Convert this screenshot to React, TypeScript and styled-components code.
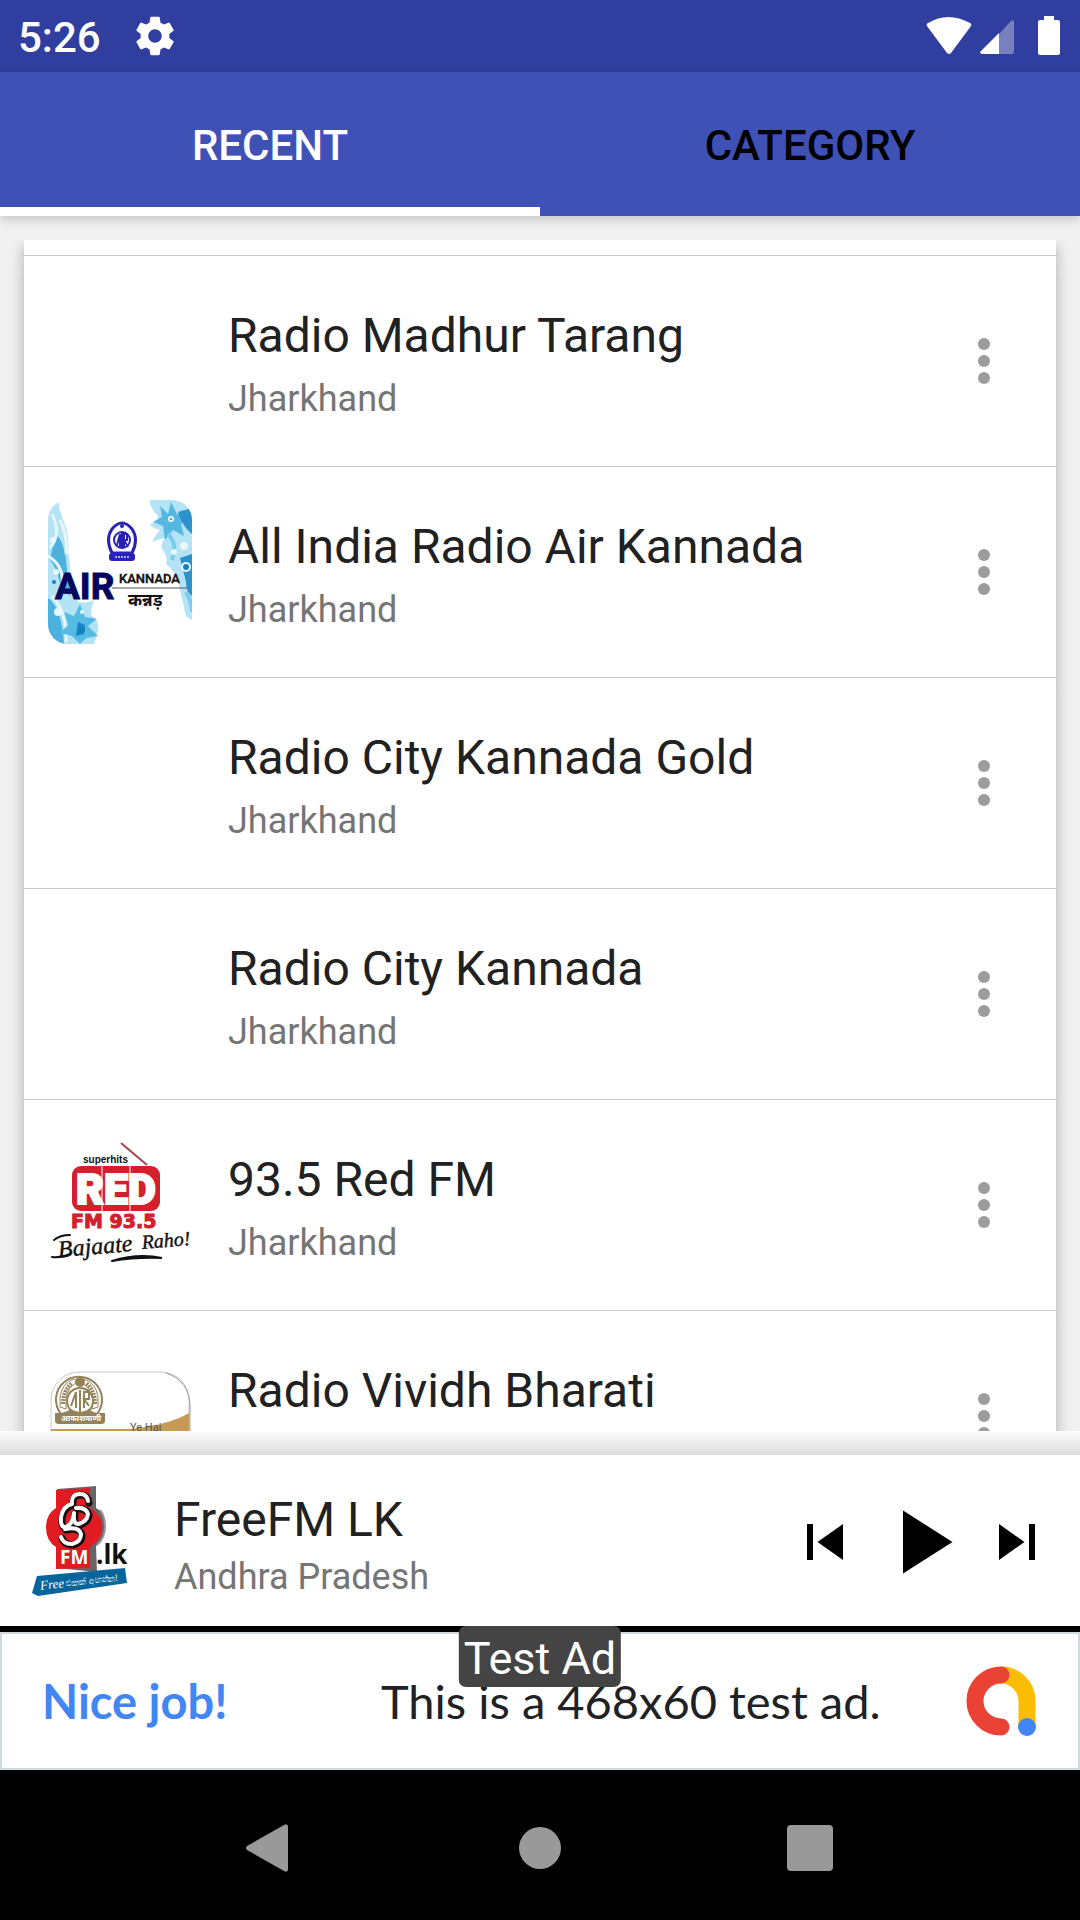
import React from "react";
import styled, { createGlobalStyle } from "styled-components";

const GlobalStyle = createGlobalStyle`
  * { box-sizing: border-box; }
  body { margin: 0; background: #f1f1f1; font-family: Roboto, "Noto Sans", sans-serif; }
  button { border: 0; padding: 0; background: none; font: inherit; color: inherit; cursor: pointer; }
  svg { display: block; }
`;

const Screen = styled.div`
  display: flex;
  flex-direction: column;
  height: 100vh;
  overflow: hidden;
`;

const StatusBar = styled.header`
  display: flex;
  align-items: center;
  flex: none;
  height: 72px;
  padding: 0 20px 0 18px;
  background: #303e9f;
  color: #fff;
`;

const Clock = styled.time`
  padding-top: 4px;
  font-size: 42px;
  font-weight: 500;
  line-height: 48px;
`;

const StatusIcons = styled.div`
  display: flex;
  align-items: center;
  gap: 8px;
  margin-left: auto;
`;

const GearIcon = styled.svg`
  width: 46px;
  height: 46px;
  margin-left: 31px;
`;

const Tabs = styled.nav`
  position: relative;
  z-index: 1;
  display: grid;
  grid-template-columns: 1fr 1fr;
  flex: none;
  height: 144px;
  background: #3f51b5;
  box-shadow: 0 3px 10px rgba(0, 0, 0, 0.2);
`;

const Tab = styled.button<{ $active?: boolean }>`
  && {
    padding-top: 12px;
    border-bottom: 9px solid ${(p) => (p.$active ? "#fff" : "transparent")};
    color: ${(p) => (p.$active ? "#fff" : "#000")};
    font-size: 42px;
    font-weight: 500;
    line-height: 48px;
  }
`;

const Main = styled.main`
  display: flex;
  flex-direction: column;
  flex: 1;
  min-height: 0;
  padding-top: 24px;
`;

const List = styled.ul`
  isolation: isolate;
  flex: 1;
  min-height: 0;
  overflow: hidden;
  margin: 0;
  padding: 0 24px;
  list-style: none;
`;

const Card = styled.li`
  position: relative;
  display: flex;
  align-items: center;
  gap: 36px;
  padding: 33px 24px;
  border-bottom: 1px solid #c8c8c8;
  background: #fff;

  &::before {
    content: "";
    position: absolute;
    inset: 0;
    z-index: -1;
    box-shadow: 0 6px 14px rgba(0, 0, 0, 0.3);
  }
`;

const CardTail = styled(Card)`
  height: 16px;
  padding: 0;
`;

const Thumb = styled.div`
  flex: none;
  width: 144px;
  height: 144px;
`;

const Texts = styled.div<{ $gap: number }>`
  display: flex;
  flex: 1;
  flex-direction: column;
  gap: ${(p) => p.$gap}px;
  min-width: 0;
  padding-top: 6px;
  white-space: nowrap;
`;

const Title = styled.h2`
  margin: 0;
  color: #212121;
  font-size: 48px;
  font-weight: 400;
  line-height: 56px;
`;

const Region = styled.p`
  margin: 0;
  color: #757575;
  font-size: 36px;
  line-height: 42px;
`;

const MoreButton = styled.button`
  display: grid;
  flex: none;
  place-items: center;
  width: 96px;
  height: 96px;
`;

const PlayerShade = styled.div`
  flex: none;
  height: 24px;
  background: linear-gradient(#fefefe, #dcdcdc);
`;

const Player = styled.section`
  display: flex;
  align-items: center;
  flex: none;
  height: 171px;
  padding: 3px 27px 0;
  background: #fff;
`;

const PlayerLogo = styled.div`
  flex: none;
  width: 147px;
`;

const Controls = styled.div`
  display: flex;
  align-items: center;
  gap: 6px;
`;

const Ad = styled.aside`
  position: relative;
  flex: none;
  border-top: 6px solid #000;
`;

const AdLink = styled.a`
  display: flex;
  align-items: center;
  height: 138px;
  padding: 0 42px 0 40px;
  border: 2px solid #cfd8dc;
  background: #fff;
  color: #202124;
  font-family: Lato, sans-serif;
  font-size: 47px;
  line-height: 54px;
  text-decoration: none;
  white-space: nowrap;
`;

const AdLead = styled.strong`
  flex: none;
  width: 339px;
  color: #4285f4;
  font-weight: 700;
`;

const AdText = styled.span`
  flex: 1;
`;

const AdBadge = styled.span`
  position: absolute;
  top: -6px;
  left: 50%;
  padding: 6px 5px 2px;
  border-radius: 7px;
  background: #444;
  color: #fff;
  font-size: 45px;
  line-height: 53px;
  white-space: nowrap;
  transform: translateX(-50%);
`;

const NavBar = styled.footer`
  display: flex;
  justify-content: center;
  flex: none;
  padding-top: 6px;
  background: #000;
`;

const NavButton = styled.button`
  display: grid;
  place-items: center;
  width: 25%;
  height: 144px;
`;

const AirLogo = () => (
  <svg width="144" height="144" viewBox="0 0 144 144" role="img" aria-label="AIR Kannada">
    <defs>
      <clipPath id="air-clip"><rect width="144" height="144" rx="20" /></clipPath>
    </defs>
    <g clipPath="url(#air-clip)">
      <rect width="144" height="144" fill="#fff" />
      <path d="M0 0h10q2 14 6 22 6 14 4 30 4 16 0 26 10 14 10 24 10 2 16-2-4 10-2 16 8 6 6 14-2 8-4 14H0z" fill="#b4e3f5" />
      <path d="M7 34q10 6 12 36l3 26-8-6Q8 66 2 60zM0 98q14 10 16 46H0z" fill="#4db1dd" />
      <path d="M4 14q10 20-2 34M0 56q20 12 12 38M4 96q16 18 14 46M12 20q8 16 6 34" fill="none" stroke="#e4f7fd" strokeWidth="3" />
      <path d="M16 112l10 4 6-12 5 13 12 2-9 7 10 10-12 2-6 6-8-8-12-3 8-8z" fill="#55bbe4" />
      <path d="M30 122l7 3-1 9-8 2z" fill="#1784c4" />
      <path d="M102 0h42v120q-8-2-8-14-4-14-6-26-6-12-12-16 2-6-2-12-6-8 2-14-10 2-14 4 4-8 8-12-8-2-10-6 8-2 8-8-6-6-8-12z" fill="#b4e3f5" />
      <path d="M112 6l8 8 3-12 6 12 12 2-8 8 3 12-11-6-8 10-2-14-10-4 9-5z" fill="#55b8e2" />
      <path d="M144 8v26q-10-8-14-22zM132 58l12-4v42q-6-4-6-14z" fill="#2b92cc" />
      <path d="M120 34q10 10 4 26M138 92q6 10 6 20" fill="none" stroke="#7acdec" strokeWidth="4" />
      <g fill="#e9f8fd">
        <circle cx="123" cy="19" r="3" /><circle cx="136" cy="46" r="4" /><circle cx="8" cy="72" r="3" />
        <circle cx="126" cy="52" r="3" /><circle cx="34" cy="112" r="2" /><circle cx="10" cy="112" r="4" />
        <circle cx="5" cy="40" r="3" /><circle cx="138" cy="67" r="5" />
      </g>
      <g fill="#1680bd">
        <circle cx="123" cy="19" r="1" /><circle cx="138" cy="67" r="3" /><circle cx="6" cy="82" r="2" /><circle cx="34" cy="130" r="3" />
      </g>
      <path d="M64 53q-7-14 0-24 10-12 20 0 7 10 0 24z" fill="#fff" stroke="#2a22b8" strokeWidth="3" />
      <circle cx="74" cy="40" r="8" fill="none" stroke="#2a22b8" strokeWidth="2" />
      <circle cx="74" cy="26" r="2" fill="#2a22b8" />
      <path d="M69 45l3-11v13M74 32v17M76 47V34h3v6h-3l4 7" fill="none" stroke="#2a22b8" strokeWidth="2" />
      <rect x="61" y="53" width="26" height="8" rx="3" fill="#2a22b8" />
      <path d="M67 57h14" stroke="#a9a6ee" strokeWidth="2" strokeDasharray="2 1" />
      <text x="7" y="99" fontFamily="Roboto, sans-serif" fontWeight="700" fontSize="37" fill="#060660" stroke="#060660">AIR</text>
      <path d="M64 88h75" stroke="#555" strokeWidth="1" />
      <text x="71" y="83" fontFamily="Roboto, sans-serif" fontWeight="500" fontSize="13" fill="#111" stroke="#111" strokeWidth=".4">KANNADA</text>
      <text x="80" y="106" fontFamily="Noto Sans, sans-serif" fontWeight="700" fontSize="17" fill="#111">कन्नड़</text>
    </g>
  </svg>
);

const RedFmLogo = () => (
  <svg width="144" height="144" viewBox="0 0 144 144" role="img" aria-label="Red FM 93.5">
    <path d="M73 10l26 22" stroke="#a4444c" strokeWidth="2" />
    <rect x="24" y="33" width="88" height="45" rx="9" fill="#d3202c" />
    <path d="M54 33v45M82 33v45" stroke="#fff" strokeWidth="1" />
    <text x="35" y="30" fontFamily="Liberation Sans, sans-serif" fontWeight="700" fontSize="10" fill="#111">superhits</text>
    <text x="28" y="71" fontFamily="Roboto, sans-serif" fontWeight="900" fontSize="43" fill="#fff" stroke="#fff" strokeWidth="2">RED</text>
    <text x="23" y="95" fontFamily="DejaVu Sans, sans-serif" fontWeight="700" fontSize="19" fill="#d3202c" stroke="#d3202c">FM 93.5</text>
    <g transform="rotate(-5 72 115)" fill="#111" stroke="#111" strokeWidth=".4" fontFamily="Liberation Serif, serif" fontStyle="italic">
      <text x="10" y="119" fontSize="24">Bajaate</text>
      <text x="94" y="118" fontSize="20">Raho!</text>
    </g>
    <path d="M6 107q6-5 16-5M4 124q10 1 18-3M64 128q26-8 50-3-26-1-50 3" fill="none" stroke="#111" strokeWidth="2" strokeLinecap="round" />
  </svg>
);

const VividhLogo = () => (
  <svg width="144" height="144" viewBox="0 0 144 144" role="img" aria-label="Vividh Bharati">
    <rect x="3" y="28" width="138" height="130" rx="28" fill="#fff" stroke="#c8c8c8" strokeWidth="1" />
    <path d="M118 29q24 8 24 34v82" fill="none" stroke="#999" strokeWidth="1" />
    <path d="M141 69v20H3v-4h78q40-4 60-16z" fill="#c49a55" />
    <path d="M13 70a23 23 0 1 1 36 0" fill="#fff" stroke="#94825a" strokeWidth="2" />
    <path d="M12 63V53q2-14 14-18l4 3q-10 4-12 17v10zM50 63V53q-2-14-14-18l-4 3q10 4 12 17v10z" fill="none" stroke="#94825a" strokeWidth="1" />
    <path d="M15 60q0-14 9-21M47 60q0-14-9-21" fill="none" stroke="#94825a" strokeWidth="4" strokeDasharray="2 1" />
    <circle cx="32" cy="38" r="5" fill="#94825a" />
    <circle cx="32" cy="57" r="13" fill="#fff" stroke="#94825a" strokeWidth="2" />
    <path d="M23 62l5-14v16M32 46v22M36 64V48h5v7h-5l5 7" fill="none" stroke="#94825a" strokeWidth="2" />
    <path d="M7 69h6q8-2 10-4 9 6 18 0 4 4 10 4h6v8q0 3-4 3H11q-4 0-4-3z" fill="#94825a" />
    <text x="13" y="77" fontFamily="Noto Sans, sans-serif" fontWeight="700" fontSize="8" fill="#fff">आकाशवाणी</text>
    <text x="82" y="87" fontFamily="Roboto, sans-serif" fontSize="11" fill="#555">Ye Hai</text>
  </svg>
);

const FreeFmLogo = () => (
  <svg width="108" height="120" viewBox="0 0 108 120" role="img" aria-label="FreeFM.lk">
    <path d="M30 7l39-3v22q9 4 9 19 0 13-9 19l1 26-41-4z" fill="#6b6467" />
    <path d="M73 28q5 6 5 17t-8 18" fill="none" stroke="#9b9598" strokeWidth="2" />
    <path d="M29 8l34-2v20q12 6 12 19 0 13-12 20v21l-34 1V65q-10-6-10-20 0-13 10-19z" fill="#e11b22" />
    <g fill="none" strokeLinecap="round" strokeLinejoin="round">
      <path d="M62 21Q61 13 54 13 45 13 46 23 37 25 35 36 34 47 40 46 47 43 48 32 47 43 52 43 61 41 62 33 60 26 50 27M39 48Q53 45 55 53 55 61 46 63 37 63 35 56" stroke="#111" strokeWidth="7" />
      <path d="M61 19Q60 12 53 12 44 12 45 22 36 24 34 35 33 46 39 45 46 42 47 31 46 42 51 42 60 40 61 32 59 25 49 26M38 47Q52 44 54 52 54 60 45 62 36 62 34 55" stroke="#fff" strokeWidth="4" />
    </g>
    <text x="33" y="82" fontFamily="Open Sans, sans-serif" fontWeight="700" fontSize="19" fill="#fff">FM</text>
    <text x="69" y="82" fontFamily="Open Sans, sans-serif" fontWeight="700" fontSize="26" fill="#111">.lk</text>
    <path d="M10 94l88-8 2 15-89 13-6-3z" fill="#07659c" />
    <g transform="rotate(-6 50 100)" fill="#fff">
      <text x="13" y="104" fontFamily="Liberation Serif, serif" fontStyle="italic" fontSize="13">Free</text>
      <text x="39" y="103" fontFamily="Noto Sans, sans-serif" fontSize="9">එකක් අහන්න!</text>
    </g>
  </svg>
);

const AdMobLogo = () => (
  <svg width="70" height="70" viewBox="0 0 70 70" fill="none" strokeWidth="17" strokeLinecap="round" aria-hidden="true">
    <path d="M35 9a26 26 0 0 1 26 26v26" stroke="#fbbc04" />
    <path d="M35 9a26 26 0 0 0 0 52" stroke="#ea4335" />
    <circle cx="61" cy="61" r="9" fill="#4285f4" />
  </svg>
);

const stations = [
  { name: "Radio Madhur Tarang", region: "Jharkhand" },
  { name: "All India Radio Air Kannada", region: "Jharkhand", logo: <AirLogo /> },
  { name: "Radio City Kannada Gold", region: "Jharkhand" },
  { name: "Radio City Kannada", region: "Jharkhand" },
  { name: "93.5 Red FM", region: "Jharkhand", logo: <RedFmLogo /> },
  { name: "Radio Vividh Bharati", region: "Jharkhand", logo: <VividhLogo /> },
];

export default function App() {
  return (
    <Screen>
      <GlobalStyle />
      <StatusBar>
        <Clock>5:26</Clock>
        <GearIcon viewBox="0 0 24 24" fill="#fff" aria-hidden="true">
          <path d="M19.43 12.98c.04-.32.07-.64.07-.98s-.03-.66-.07-.98l2.11-1.65c.19-.15.24-.42.12-.64l-2-3.46c-.12-.22-.39-.3-.61-.22l-2.49 1c-.52-.4-1.08-.73-1.69-.98l-.38-2.65C14.46 2.18 14.25 2 14 2h-4c-.25 0-.46.18-.49.42l-.38 2.65c-.61.25-1.17.59-1.69.98l-2.49-1c-.23-.09-.49 0-.61.22l-2 3.46c-.13.22-.07.49.12.64l2.11 1.65c-.04.32-.07.65-.07.98s.03.66.07.98l-2.11 1.65c-.19.15-.24.42-.12.64l2 3.46c.12.22.39.3.61.22l2.49-1c.52.4 1.08.73 1.69.98l.38 2.65c.03.24.24.42.49.42h4c.25 0 .46-.18.49-.42l.38-2.65c.61-.25 1.17-.59 1.69-.98l2.49 1c.23.09.49 0 .61-.22l2-3.46c.12-.22.07-.49-.12-.64l-2.11-1.65zM12 15.500c-1.930 0-3.500-1.570-3.500-3.500s1.570-3.500 3.500-3.500 3.500 1.570 3.500 3.500-1.570 3.500-3.500 3.500z" />
        </GearIcon>
        <StatusIcons>
          <svg width="46" height="40" viewBox="0 0 46 40" fill="#fff" aria-hidden="true">
            <path d="M1 10Q0 8 2 7 22-5 44 7q2 1 1 3L25 37q-2 2-4 0z" />
          </svg>
          <svg width="34" height="40" viewBox="0 0 34 40" fill="#fff" aria-hidden="true">
            <path d="M19 18L31 5q3-2 3 1v30q0 2-2 2H19z" opacity=".35" />
            <path d="M19 17v21H2q-3-1-1-3z" />
          </svg>
          <svg width="38" height="40" viewBox="0 0 38 40" fill="#fff" aria-hidden="true">
            <path d="M22 0h10v4h4q2 0 2 2v31q0 2-2 2H18q-2 0-2-2V6q0-2 2-2h4z" />
          </svg>
        </StatusIcons>
      </StatusBar>
      <Tabs>
        <Tab $active>RECENT</Tab>
        <Tab>CATEGORY</Tab>
      </Tabs>
      <Main>
        <List>
          <CardTail aria-hidden="true" />
          {stations.map((s) => (
            <Card key={s.name}>
              <Thumb>{s.logo}</Thumb>
              <Texts $gap={14}>
                <Title>{s.name}</Title>
                <Region>{s.region}</Region>
              </Texts>
              <MoreButton aria-label={`More options for ${s.name}`}>
                <svg width="14" height="48" viewBox="0 0 14 48" fill="#9c9c9c" aria-hidden="true">
                  <circle cx="7" cy="7" r="6" />
                  <circle cx="7" cy="24" r="6" />
                  <circle cx="7" cy="41" r="6" />
                </svg>
              </MoreButton>
            </Card>
          ))}
        </List>
        <PlayerShade />
      </Main>
      <Player>
        <PlayerLogo><FreeFmLogo /></PlayerLogo>
        <Texts $gap={8}>
          <Title>FreeFM LK</Title>
          <Region>Andhra Pradesh</Region>
        </Texts>
        <Controls>
          <button aria-label="Previous">
            <svg width="72" height="72" viewBox="0 0 24 24"><path d="M6 6h2v12H6zm3.500 6l8.500 6V6z" /></svg>
          </button>
          <button aria-label="Play">
            <svg width="108" height="108" viewBox="0 0 24 24"><path d="M8 5v14l11-7z" /></svg>
          </button>
          <button aria-label="Next">
            <svg width="72" height="72" viewBox="0 0 24 24"><path d="M6 18l8.500-6L6 6v12zM16 6v12h2V6h-2z" /></svg>
          </button>
        </Controls>
      </Player>
      <Ad>
        <AdLink href="#ad">
          <AdLead>Nice job!</AdLead>
          <AdText>This is a 468x60 test ad.</AdText>
          <AdMobLogo />
        </AdLink>
        <AdBadge>Test Ad</AdBadge>
      </Ad>
      <NavBar>
        <NavButton aria-label="Back">
          <svg width="48" height="48" viewBox="0 0 48 48" fill="#999"><path d="M1 22L38 1q4-2 4 2v42q0 4-4 2L1 26q-2-2 0-4z" /></svg>
        </NavButton>
        <NavButton aria-label="Home">
          <svg width="42" height="42" viewBox="0 0 42 42" fill="#999"><circle cx="21" cy="21" r="21" /></svg>
        </NavButton>
        <NavButton aria-label="Overview">
          <svg width="46" height="46" viewBox="0 0 46 46" fill="#999"><rect width="46" height="46" rx="4" /></svg>
        </NavButton>
      </NavBar>
    </Screen>
  );
}
